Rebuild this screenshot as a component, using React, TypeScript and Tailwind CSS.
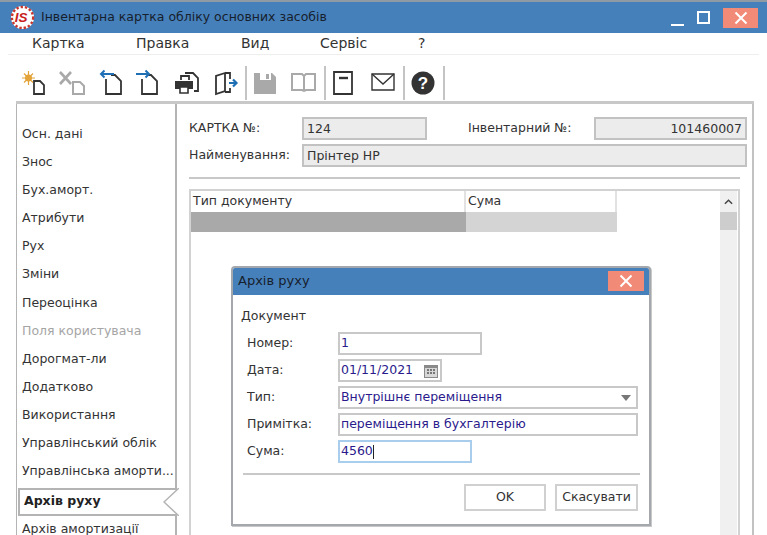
import React from "react";

const items = ["Осн. дані","Знос","Бух.аморт.","Атрибути","Рух","Зміни","Переоцінка","Поля користувача","Дорогмат-ли","Додатково","Використання","Управлінський облік","Управлінська аморти..."];

const ToolIcon = ({ children, cls = "" }: { children: React.ReactNode; cls?: string }) => (
  <svg viewBox="0 0 30 30" className={`w-[30px] h-[30px] shrink-0 ${cls}`}>{children}</svg>
);

const Sep = ({ cls }: { cls: string }) => <div className={`w-[2px] h-[34px] bg-[#c4c4c4] shrink-0 ${cls}`} />;

function Field({ w, children, right, cls = "" }: { w: string; children?: React.ReactNode; right?: boolean; cls?: string }) {
  return (
    <div className={`${w} h-[23px] border-2 border-[#c2c2c2] bg-[#ececec] flex items-center px-[3px] pt-[1px] text-[12.5px] text-[#333] ${right ? "justify-end" : ""} ${cls}`}>
      {children}
    </div>
  );
}

function Row({ label, children, mb }: { label: string; children: React.ReactNode; mb: string }) {
  return (
    <div className={`flex items-center ${mb}`}>
      <div className="w-[97px] pl-[6px] text-[12.5px] text-[#333] shrink-0 -mt-[1px]">{label}</div>
      {children}
    </div>
  );
}

export default function App() {
  return (
    <div className="relative w-[767px] h-[535px] overflow-hidden bg-white text-[#333]" style={{ fontFamily: '"DejaVu Sans", Verdana, sans-serif' }}>
      <div className="h-[33px] bg-[#4680bb] border-t-2 border-[#8f9aa5] flex items-center shrink-0">
        <svg viewBox="0 0 26 26" className="w-[25px] h-[25px] ml-[10px] shrink-0">
          <circle cx="13" cy="13" r="12" fill="#fff" />
          <circle cx="13" cy="13" r="11" fill="none" stroke="#c8372d" strokeWidth="2.5" strokeDasharray="2.5 2" />
          <circle cx="14" cy="13" r="8.5" fill="#fff" />
          <text x="5" y="18" fontSize="14" fontWeight="700" fontStyle="italic" fill="#c8201c" fontFamily="Liberation Sans">IS</text>
        </svg>
        <div className="ml-[6px] text-[12.5px] text-[#16202c]">Інвентарна картка обліку основних засобів</div>
        <div className="ml-auto flex items-center">
          <div className="w-[13px] h-[2px] bg-white mt-[14px]" />
          <div className="w-[13px] h-[13px] border-[2.5px] border-white ml-[13px]" />
          <div className="w-[35px] h-[20px] bg-[#f28a78] ml-[13px] mr-[9px] flex items-center justify-center">
            <svg viewBox="0 0 14 14" className="w-[14px] h-[14px]"><path d="M1.5 1.5l11 11M12.5 1.5l-11 11" stroke="#fff" strokeWidth="2" /></svg>
          </div>
        </div>
      </div>

      <div className="h-[22px] mx-[8px] border-b border-[#eeeeee] flex items-center text-[14px] text-[#333]">
        <span className="ml-[24px] w-[104px]">Картка</span>
        <span className="w-[105px]">Правка</span>
        <span className="w-[79px]">Вид</span>
        <span className="w-[98px]">Сервіс</span>
        <span>?</span>
      </div>

      <div className="h-[46px] flex items-center pl-[19px] pt-[9px]">
        <ToolIcon>
          <circle cx="9.5" cy="10" r="3.5" fill="#e3a33a" />
          <path d="M9.5 3v14M3 10h13M5 5.5l9 9M14 5.5l-9 9" stroke="#e3a33a" strokeWidth="1.2" />
          <path d="M15 19v-6h6l4 4v9H15z" fill="none" stroke="#333" strokeWidth="1.8" />
        </ToolIcon>
        <ToolIcon cls="ml-[8px]">
          <path d="M3 4l11 12M14 4L3 16" stroke="#a9a9a9" strokeWidth="2.6" />
          <path d="M16 14h7l4 4v8H16z" fill="none" stroke="#a9a9a9" strokeWidth="2" />
        </ToolIcon>
        <ToolIcon cls="ml-[8px]">
          <path d="M11 11V26H26V13L20 7H16" fill="none" stroke="#333" strokeWidth="1.8" />
          <path d="M19 6H6M9.5 2.5L6 6l3.5 3.5" fill="none" stroke="#1f6fb5" strokeWidth="2" />
        </ToolIcon>
        <ToolIcon cls="ml-[8px]">
          <path d="M9 11V26H24V13L18 7H15" fill="none" stroke="#333" strokeWidth="1.8" />
          <path d="M3 6h13M12.5 2.5L16 6l-3.5 3.5" fill="none" stroke="#1f6fb5" strokeWidth="2" />
        </ToolIcon>
        <ToolIcon cls="ml-[8px]">
          <path d="M14 5h8l5 5v13h-4" fill="none" stroke="#333" strokeWidth="1.8" />
          <path d="M10 12V8h8v4" fill="none" stroke="#333" strokeWidth="1.8" />
          <path d="M4 13h18v8H4z" fill="#333" />
          <path d="M9 19h8v6H9z" fill="#fff" stroke="#333" strokeWidth="1.6" />
        </ToolIcon>
        <ToolIcon cls="ml-[8px]">
          <path d="M16 5L7 8v18l9-3zM16 5h5v6M21 20v4h-5" fill="none" stroke="#333" strokeWidth="1.8" />
          <path d="M20 15h7M24 11.5l3.500 3.500-3.500 3.500" fill="none" stroke="#1f6fb5" strokeWidth="2.2" />
        </ToolIcon>
        <Sep cls="ml-[6px]" />
        <ToolIcon cls="ml-[3px]">
          <path d="M4 5h18l4 4v17H4z" fill="#a9a9a9" />
          <path d="M10 5h11v7H10z" fill="#fff" />
          <path d="M16 6h3v5h-3z" fill="#a9a9a9" />
        </ToolIcon>
        <ToolIcon cls="ml-[8px]">
          <path d="M4 6h10l2 2 2-2h9v16H18l-2 1-2-1H4zM16 8v15" fill="none" stroke="#a9a9a9" strokeWidth="2" />
        </ToolIcon>
        <Sep cls="ml-[6px]" />
        <ToolIcon cls="ml-[2px]">
          <path d="M6 4h18v22H6z" fill="none" stroke="#333" strokeWidth="1.8" />
          <path d="M11 10h9" stroke="#333" strokeWidth="2.4" />
        </ToolIcon>
        <ToolIcon cls="ml-[10px]">
          <path d="M4 6h22v16H4z" fill="none" stroke="#333" strokeWidth="1.4" />
          <path d="M4 6l11 10L26 6" fill="none" stroke="#333" strokeWidth="1.4" />
        </ToolIcon>
        <Sep cls="ml-[5px]" />
        <ToolIcon cls="ml-[3px]">
          <circle cx="15" cy="15" r="11.5" fill="#333" />
          <text x="15" y="21" textAnchor="middle" fontSize="17" fontWeight="700" fill="#fff" fontFamily="Liberation Sans">?</text>
        </ToolIcon>
        <Sep cls="ml-[5px]" />
      </div>

      <div className="ml-[16px] w-[738px] border-t-[3px] border-[#c8c8c8] flex h-[434px]">
        <div className="w-[161px] shrink-0 border-l border-r-[2px] border-[#b4b4b4] pt-[16px]">
          {items.map((t) => (
            <div key={t} className={`h-[28.15px] pl-[5px] flex items-center text-[12.5px] whitespace-nowrap ${t === "Поля користувача" ? "text-[#a5a5a5]" : ""}`}>{t}</div>
          ))}
          <div className="relative h-[28px] mt-[2px] -mr-[2px] border-2 border-[#b4b4b4] border-r-0 bg-white pl-[4px] flex items-center text-[12.5px] font-bold text-[#222] ml-[1px]">
            Архів руху
            <svg viewBox="0 0 16 28" className="absolute right-[-2px] top-[-2px] w-[16px] h-[28px]">
              <path d="M16 0L1 14l15 14" fill="#fff" stroke="#b4b4b4" strokeWidth="1.5" />
            </svg>
          </div>
          <div className="h-[28px] pl-[5px] flex items-center text-[12.5px] whitespace-nowrap">Архів амортизації</div>
        </div>

        <div className="flex-1 border-r-[2px] border-[#c2c2c2] pl-[12px] pr-[5px] pt-[13px]">
          <div className="flex items-center mb-[4px]">
            <div className="w-[113px] text-[12.5px]">КАРТКА №:</div>
            <Field w="w-[125px]">124</Field>
            <div className="w-[167px] pl-[41px] text-[12.5px] whitespace-nowrap">Інвентарний №:</div>
            <Field w="w-[153px]" right>101460007</Field>
          </div>
          <div className="flex items-center">
            <div className="w-[113px] text-[12.5px]">Найменування:</div>
            <Field w="w-[445px]">Прінтер HP</Field>
          </div>
          <div className="h-[2px] bg-[#c8c8c8] mt-[10px] mr-[7px]" />
          <div className="mt-[10px] mr-[7px] h-[400px] border-2 border-[#d2d2d2] flex">
            <div className="w-[426px]">
              <div className="flex h-[21px] text-[12.5px]">
                <div className="w-[275px] pl-[2px] border-r-2 border-[#e2e2e2] flex items-center">Тип документу</div>
                <div className="flex-1 pl-[2px] border-r-2 border-[#e2e2e2] flex items-center">Сума</div>
              </div>
              <div className="flex h-[20px]">
                <div className="w-[275px] bg-[#a9a9a9]" />
                <div className="flex-1 bg-[#d4d4d4]" />
              </div>
            </div>
            <div className="ml-auto w-[17px] bg-[#f0f0f0] mr-[1px] flex flex-col">
              <div className="h-[21px] flex items-center justify-center">
                <svg viewBox="0 0 10 6" className="w-[9px] h-[6px]"><path d="M1 5l4-4 4 4" fill="none" stroke="#444" strokeWidth="1.6" /></svg>
              </div>
              <div className="h-[18px] bg-[#cdcdcd]" />
            </div>
          </div>
        </div>
      </div>

      <div className="absolute left-[231px] top-[266px] w-[420px] h-[260px] border-[2px] border-[#a4a8ac] rounded-t-[4px] bg-white flex flex-col shadow-[1px_1px_0_#c8c8c8]">
        <div className="h-[27px] bg-[#4680bb] rounded-t-[2px] flex items-center pl-[5px] pb-[1px] text-[13px] text-[#16202c] shrink-0">
          Архів руху
          <div className="ml-auto w-[36px] h-[20px] bg-[#f28a78] mr-[5px] flex items-center justify-center">
            <svg viewBox="0 0 14 14" className="w-[14px] h-[14px]"><path d="M1.5 1.5l11 11M12.5 1.5l-11 11" stroke="#fff" strokeWidth="2" /></svg>
          </div>
        </div>
        <div className="pl-[8px] pr-[10px] pt-[13px] flex-1 flex flex-col">
          <div className="text-[12.5px] mb-[8px] h-[16px] flex items-center">Документ</div>
          <Row label="Номер:" mb="mb-[4px]">
            <div className="w-[144px] h-[23px] border-2 border-[#c8c8c8] flex items-center px-[1px] text-[12.5px] text-[#2a1a8c]">1</div>
          </Row>
          <Row label="Дата:" mb="mb-[4px]">
            <div className="w-[104px] h-[23px] border-2 border-[#c8c8c8] flex items-center px-[1px] text-[12.5px] text-[#2a1a8c]">
              01/11/2021
              <svg viewBox="0 0 14 14" className="w-[14px] h-[14px] ml-auto mr-[1px]">
                <path d="M0 1h14v13H0z" fill="#8a8a8a" />
                <path d="M1 4h12v9H1z" fill="#d8d8d8" />
                <path d="M3 5h2v2H3zM6 5h2v2H6zM9 5h2v2H9zM3 8h2v2H3zM6 8h2v2H6zM9 8h2v2H9z" fill="#777" />
              </svg>
            </div>
          </Row>
          <Row label="Тип:" mb="mb-[4px]">
            <div className="w-[300px] h-[23px] border-2 border-[#c8c8c8] flex items-center px-[1px] text-[12.5px] text-[#2a1a8c]">
              Внутрішнє переміщення
              <svg viewBox="0 0 10 6" className="w-[10px] h-[6px] ml-auto mr-[4px]"><path d="M0 0h10L5 6z" fill="#777" /></svg>
            </div>
          </Row>
          <Row label="Примітка:" mb="mb-[4px]">
            <div className="w-[300px] h-[23px] border-2 border-[#c8c8c8] flex items-center px-[1px] text-[12.5px] text-[#2a1a8c]">переміщення в бухгалтерію</div>
          </Row>
          <Row label="Сума:" mb="mb-[0px]">
            <div className="w-[134px] h-[23px] border-2 border-[#a9cdec] flex items-center px-[1px] text-[12.5px] text-[#2a1a8c]">
              4560<span className="w-px h-[14px] bg-[#222]" />
            </div>
          </Row>
          <div className="h-[2px] bg-[#c8c8c8] mt-[10px] ml-[2px] -mr-[1px]" />
          <div className="flex justify-end gap-[9px] mt-[9px] mr-[1px]">
            <div className="w-[82px] h-[27px] border-2 border-[#d0d0d0] flex items-center justify-center text-[12.5px]">OK</div>
            <div className="w-[83px] h-[27px] border-2 border-[#d0d0d0] flex items-center justify-center text-[12.5px]">Скасувати</div>
          </div>
        </div>
      </div>
    </div>
  );
}
